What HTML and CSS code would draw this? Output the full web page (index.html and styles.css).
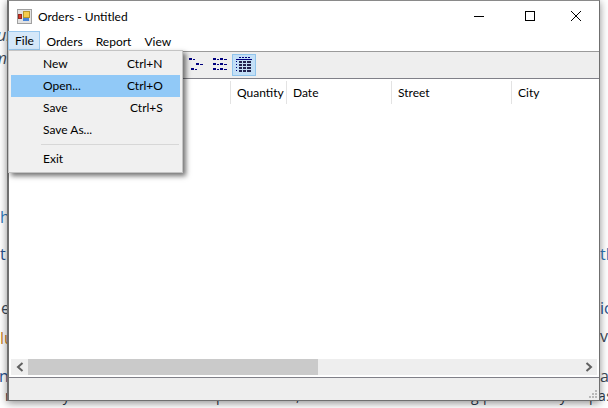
FILE: index.html
```html
<!DOCTYPE html>
<html lang="en">
<head>
  <meta charset="UTF-8" />
  <title>Orders - Untitled</title>
  <link rel="stylesheet" href="styles.css">
</head>
<body>
  <div class="backdrop">
    <span class="frag dark slanted" style="left:-3px;top:25px">ur</span>
    <span class="frag dark slanted" style="left:-7px;top:48px">m</span>
    <span class="frag blue" style="left:0;top:207px">h</span>
    <span class="frag navy" style="left:0;top:244px">t</span>
    <span class="frag blue" style="left:600px;top:244px">th</span>
    <span class="frag dark" style="left:1px;top:298px">e</span>
    <span class="frag navy" style="left:600px;top:298px">ic</span>
    <span class="frag orange" style="left:0;top:328px">lu</span>
    <span class="frag dark" style="left:600px;top:326px">v</span>
    <span class="frag navy" style="left:-1px;top:366px">n</span>
    <span class="frag dark" style="left:600px;top:366px">al</span>
    <span class="frag line" style="left:5px;top:386px">method you want to call takes parameters, include them in the using parameter you pass</span>
  </div>

  <div class="window">
    <div class="titlebar">
      <svg class="appicon" width="15" height="15" viewBox="0 0 15 15">
        <rect x="0.5" y="0.5" width="14" height="14" fill="#e2e2e2" stroke="#a0a0a0"/>
        <rect x="6.500" y="2.500" width="6" height="6" fill="#f4cc4e" stroke="#b8962c"/>
        <rect x="1.500" y="5.500" width="3" height="4" fill="#d8392b" stroke="#962a20"/>
        <rect x="6" y="9" width="6" height="3" fill="#4a86d8"/>
      </svg>
      <span class="title">Orders - Untitled</span>
      <div class="caption">
        <svg width="46" height="30" viewBox="0 0 46 30"><path d="M13 15.500h10" stroke="#000"/></svg>
        <svg width="46" height="30" viewBox="0 0 46 30"><rect x="18.500" y="10.500" width="9" height="9" fill="none" stroke="#000"/></svg>
        <svg width="46" height="30" viewBox="0 0 46 30"><path d="M18 10l10 10M28 10l-10 10" stroke="#000" fill="none"/></svg>
      </div>
    </div>

    <div class="menubar">
      <span class="menuitem open">File</span>
      <span class="menuitem">Orders</span>
      <span class="menuitem">Report</span>
      <span class="menuitem">View</span>
    </div>

    <div class="toolbar">
      <span class="toolbtn">
        <svg width="16" height="16" viewBox="0 0 16 16" fill="#00007f">
          <path d="M1 1h3v2H1zM5 2h2v1H5zM8 6h3v2H8zM12 7h3v1h-3zM3 11h3v2H3zM7 12h2v1H7z"/>
        </svg>
      </span>
      <span class="toolbtn">
        <svg width="16" height="16" viewBox="0 0 16 16" fill="#00007f">
          <path d="M1 1h3v2H1zM5 2h2v1H5zM8 1h3v2H8zM12 2h3v1h-3zM1 6h3v2H1zM5 7h2v1H5zM8 6h3v2H8zM12 7h3v1h-3zM1 11h3v2H1zM5 12h2v1H5zM8 11h3v2H8zM12 12h3v1h-3z"/>
        </svg>
      </span>
      <span class="toolbtn active">
        <svg width="16" height="16" viewBox="0 0 16 16" fill="#00007f">
          <path d="M3 0h2v1H3zM6 0h2v1H6zM9 0h2v1H9zM12 0h2v1h-2zM0 2h16v1H0zM0 4h1v1H0zM0 7h1v1H0zM0 10h1v1H0zM0 13h1v1H0z"/>
          <path d="M3 4h3v2H3zM7 4h3v2H7zM11 4h4v2h-4zM3 7h3v2H3zM7 7h3v2H7zM11 7h4v2h-4zM3 10h3v2H3zM7 10h3v2H7zM11 10h4v2h-4zM3 13h3v2H3zM7 13h3v2H7zM11 13h4v2h-4z" fill="#23234f"/>
        </svg>
      </span>
    </div>

    <div class="listview">
      <div class="columns">
        <span class="col c-blank"></span>
        <span class="col c-qty">Quantity</span>
        <span class="col c-date">Date</span>
        <span class="col c-street">Street</span>
        <span class="col c-city">City</span>
      </div>
      <div class="rows"></div>
      <div class="hscroll">
        <span class="arrow">
          <svg width="8" height="10" viewBox="0 0 8 10"><path d="M6.500 1L2 5l4.500 4" fill="none" stroke="#606060" stroke-width="2"/></svg>
        </span>
        <span class="thumb"></span>
        <span class="track"></span>
        <span class="arrow">
          <svg width="8" height="10" viewBox="0 0 8 10"><path d="M1.500 1L6 5 1.500 9" fill="none" stroke="#606060" stroke-width="2"/></svg>
        </span>
      </div>
    </div>

    <div class="statusbar">
      <svg class="grip" width="10" height="10" viewBox="0 0 10 10" fill="#b8b8b8">
        <path d="M7 1h2v2H7zM4 4h2v2H4zM7 4h2v2H7zM1 7h2v2H1zM4 7h2v2H4zM7 7h2v2H7z"/>
      </svg>
    </div>

    <div class="dropdown">
      <div class="dd-item"><span>New</span><span class="keys">Ctrl+N</span></div>
      <div class="dd-item hot"><span>Open...</span><span class="keys">Ctrl+O</span></div>
      <div class="dd-item"><span>Save</span><span class="keys k-s">Ctrl+S</span></div>
      <div class="dd-item"><span>Save As...</span></div>
      <div class="dd-sep"></div>
      <div class="dd-item"><span>Exit</span></div>
    </div>
  </div>
</body>
</html>
```

FILE: styles.css
```css
html, body {
  margin: 0;
  height: 100%;
  overflow: hidden;
}

body {
  background: #fff;
  font-family: "Lato", "Open Sans", sans-serif;
  font-size: 12px;
  color: #000;
}

.backdrop {
  position: absolute;
  inset: 0;
  overflow: hidden;
}

.frag {
  position: absolute;
  font-family: "Open Sans", sans-serif;
  font-size: 16px;
  line-height: 20px;
  white-space: nowrap;
}

.slanted { font-style: italic; }

.dark { color: #3c4a58; }
.blue { color: #2f78b8; }
.navy { color: #27508c; }
.orange { color: #c8801a; }

.line {
  color: #2b3a4c;
  font-size: 14px;
  letter-spacing: 0.4px;
}

.window {
  position: absolute;
  left: 7px;
  top: 0;
  width: 593px;
  height: 401px;
  display: flex;
  flex-direction: column;
  background: #fff;
  border: 1px solid #6f6f6f;
  border-left-width: 2px;
  border-top-color: #8a8a8a;
  box-sizing: border-box;
  box-shadow: 0 2px 8px rgba(0, 0, 0, 0.45);
}

.titlebar {
  height: 30px;
  display: flex;
  align-items: center;
  flex-shrink: 0;
  padding-left: 8px;
}

.title {
  margin-left: 6px;
}

.caption {
  margin-left: auto;
  display: flex;
}

.menubar {
  height: 20px;
  display: flex;
  flex-shrink: 0;
  background: #fff;
}

.menuitem {
  padding: 0 6.500px;
  line-height: 21px;
}

.menuitem.open {
  background: #d5e8f9;
  border: 1px solid #99c8ee;
  padding: 0 6px;
  margin-left: -1px;
  line-height: 18px;
  height: 19px;
  width: 32px;
  box-sizing: border-box;
}

.toolbar {
  height: 28px;
  display: flex;
  align-items: center;
  flex-shrink: 0;
  box-sizing: border-box;
  background: #eeeeee;
  border-top: 1px solid #9a9a9a;
  border-bottom: 1px solid #808088;
  padding-left: 175px;
}

.toolbtn {
  width: 24px;
  height: 22px;
  display: flex;
  align-items: center;
  justify-content: center;
  box-sizing: border-box;
}

.toolbtn.active {
  background: #c3dff6;
  border: 1px solid #90c4ec;
}

.listview {
  flex: 1;
  display: flex;
  flex-direction: column;
  min-height: 0;
  padding: 0 2px;
}

.columns {
  height: 25px;
  display: flex;
  flex-shrink: 0;
  padding-top: 2px;
  box-sizing: border-box;
}

.col {
  box-sizing: border-box;
  border-right: 1px solid #e3e3e3;
  padding-left: 6px;
  line-height: 23px;
  height: 23px;
}

.c-blank { width: 220px; padding: 0; }
.c-qty { width: 56px; }
.c-date { width: 105px; }
.c-street { width: 120px; }
.c-city { width: 80px; border-right: 0; }

.rows {
  flex: 1;
}

.hscroll {
  height: 16px;
  display: flex;
  flex-shrink: 0;
  background: #eeeeee;
  margin-bottom: 2px;
}

.arrow {
  width: 17px;
  display: flex;
  align-items: center;
  justify-content: center;
  flex-shrink: 0;
}

.thumb {
  width: 290px;
  background: #cacaca;
}

.track {
  flex: 1;
}

.statusbar {
  height: 23px;
  display: flex;
  justify-content: flex-end;
  align-items: flex-end;
  flex-shrink: 0;
  background: #eeeeee;
  border-top: 1px solid #808088;
  box-sizing: border-box;
}

.grip {
  margin: 0 1px 1px 0;
}

.dropdown {
  position: absolute;
  left: -1px;
  top: 49px;
  width: 175px;
  padding: 2px;
  box-sizing: border-box;
  background: #f0f0f0;
  border: 1px solid #c4c4c4;
  box-shadow: 3px 3px 5px rgba(0, 0, 0, 0.55);
}

.dd-item {
  height: 22px;
  display: flex;
  align-items: center;
  padding-left: 32px;
  padding-bottom: 2px;
  box-sizing: border-box;
  position: relative;
}

.dd-item.hot {
  background: #91c9f7;
}

.keys {
  position: absolute;
  left: 116px;
}

.keys.k-s {
  left: 119px;
}

.dd-sep {
  height: 1px;
  margin: 3px 1px 3px 30px;
  background: #d7d7d7;
}
```
